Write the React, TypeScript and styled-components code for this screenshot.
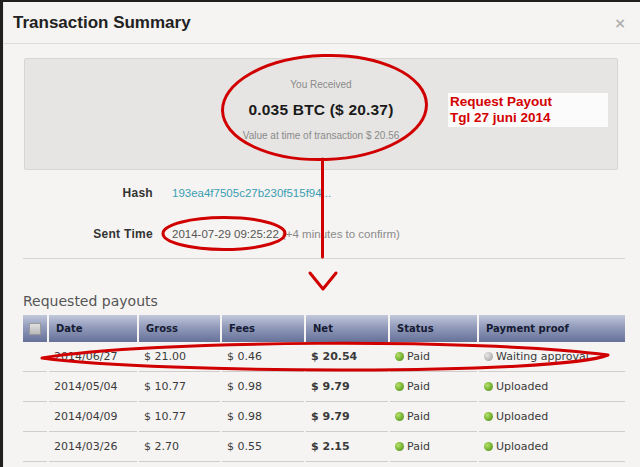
import React from "react";
import styled, { createGlobalStyle } from "styled-components";

const GlobalStyle = createGlobalStyle`
  html, body { margin: 0; padding: 0; }
  body {
    background: #1f1f1f;
    font-family: "Liberation Sans", Arial, sans-serif;
    width: 640px;
    height: 467px;
    overflow: hidden;
  }
`;

const Page = styled.div`
  position: relative;
  width: 640px;
  height: 467px;
  overflow: hidden;
`;

const Modal = styled.div`
  margin: 2px 0 0 3px;
  height: 465px;
  background: #f5f4f2;
  border-left: 1px solid #e9e8e6;
  box-sizing: border-box;
`;

const Header = styled.div`
  height: 41px;
  display: flex;
  align-items: center;
  justify-content: space-between;
  padding: 0 14px 0 9px;
  border-bottom: 1px solid #dcdbd9;
`;

const Title = styled.h1`
  margin: 0;
  font-family: "Liberation Sans", Arial, sans-serif;
  font-size: 17px;
  font-weight: bold;
  color: #222;
`;

const Close = styled.span`
  font-family: "DejaVu Sans", sans-serif;
  font-size: 14px;
  font-weight: bold;
  color: #b0b0b0;
`;

const Body = styled.div`
  padding-top: 14px;
`;

const SummaryBox = styled.div`
  position: relative;
  margin-left: 20px;
  width: 594px;
  height: 112px;
  box-sizing: border-box;
  background: #e6e5e3;
  border: 1px solid #d7d6d4;
  border-radius: 2px;
  padding-top: 19px;
  text-align: center;
`;

const Small = styled.div`
  font-size: 10px;
  line-height: 14px;
  color: #8a8a8a;
  margin-top: ${(p: { $gap?: number }) => p.$gap ?? 0}px;
`;

const Amount = styled.div`
  margin-top: 8px;
  font-size: 15.5px;
  line-height: 20px;
  font-weight: bold;
  color: #1a1a1a;
  letter-spacing: 0.2px;
`;

const Note = styled.div`
  position: absolute;
  left: 423px;
  top: 34px;
  width: 160px;
  height: 34px;
  background: #fbfbfb;
  padding: 1px 0 0 2px;
  box-sizing: border-box;
  text-align: left;
  font-size: 13.5px;
  line-height: 16px;
  font-weight: bold;
  color: #d30000;
`;

const InfoGrid = styled.div`
  display: grid;
  grid-template-columns: 149px auto;
  column-gap: 19px;
  row-gap: 25px;
  margin-top: 15px;
  align-items: center;
`;

const Label = styled.div`
  text-align: right;
  font-size: 12px;
  line-height: 16px;
  font-weight: bold;
  color: #333;
  letter-spacing: 0.3px;
`;

const Value = styled.div<{ $link?: boolean }>`
  font-size: 11.5px;
  line-height: 16px;
  color: ${(p) => (p.$link ? "#3a9db3" : "#555")};
`;

const Muted = styled.span`
  color: #8a8a8a;
`;

const Divider = styled.hr`
  margin: 16px 0 0 19px;
  width: 602px;
  border: 0;
  border-top: 1px solid #d6d5d3;
`;

const SectionTitle = styled.h2`
  margin: 33px 0 0 19px;
  font-family: "DejaVu Sans", Verdana, sans-serif;
  font-size: 14px;
  line-height: 18px;
  font-weight: normal;
  color: #555;
`;

const Table = styled.table`
  margin: 5px 0 0 17px;
  width: 606px;
  table-layout: fixed;
  border-collapse: separate;
  border-spacing: 2px 0;
  font-family: "DejaVu Sans", Verdana, sans-serif;
`;

const Th = styled.th`
  height: 27px;
  padding: 0 0 0 7px;
  text-align: left;
  font-size: 10px;
  font-weight: bold;
  color: #151b33;
  background: linear-gradient(to bottom, #c3c8dc 0%, #969fbe 40%, #7a84a8 75%, #66719a 100%);
`;

const CheckTh = styled(Th)`
  padding: 0;
  text-align: center;
`;

const CheckBox = styled.span`
  display: inline-block;
  width: 10px;
  height: 10px;
  vertical-align: middle;
  background: linear-gradient(#e0e0e0, #b9b9b9);
  border: 1px solid #9a9a9a;
`;

const Td = styled.td<{ $bold?: boolean }>`
  height: 29px;
  padding: 0 0 0 5px;
  font-size: 11px;
  color: #3a3a3a;
  font-weight: ${(p) => (p.$bold ? "bold" : "normal")};
  border-bottom: 1px solid #cfcecc;
  white-space: nowrap;
`;

const Dot = styled.span<{ $tone: "green" | "grey" }>`
  display: inline-block;
  width: 9px;
  height: 9px;
  border-radius: 50%;
  margin-right: 3px;
  vertical-align: -1px;
  background: ${(p) =>
    p.$tone === "green"
      ? "radial-gradient(circle at 35% 35%, #b6e06a 0%, #74b233 55%, #4d8418 100%)"
      : "radial-gradient(circle at 35% 35%, #e6e6e6 0%, #bdbdbd 55%, #999 100%)"};
`;

const Overlay = styled.svg`
  position: absolute;
  left: 0;
  top: 0;
  pointer-events: none;
`;

type Row = {
  date: string;
  gross: string;
  fees: string;
  net: string;
  proof: string;
  waiting?: boolean;
};

const rows: Row[] = [
  { date: "2014/06/27", gross: "$ 21.00", fees: "$ 0.46", net: "$ 20.54", proof: "Waiting approval", waiting: true },
  { date: "2014/05/04", gross: "$ 10.77", fees: "$ 0.98", net: "$ 9.79", proof: "Uploaded" },
  { date: "2014/04/09", gross: "$ 10.77", fees: "$ 0.98", net: "$ 9.79", proof: "Uploaded" },
  { date: "2014/03/26", gross: "$ 2.70", fees: "$ 0.55", net: "$ 2.15", proof: "Uploaded" },
];

export default function App() {
  return (
    <Page>
      <GlobalStyle />
      <Modal>
        <Header>
          <Title>Transaction Summary</Title>
          <Close>×</Close>
        </Header>
        <Body>
          <SummaryBox>
            <Small>You Received</Small>
            <Amount>0.035 BTC ($ 20.37)</Amount>
            <Small $gap={9}>Value at time of transaction $ 20.56</Small>
            <Note>
              Request Payout
              <br />
              Tgl 27 juni 2014
            </Note>
          </SummaryBox>
          <InfoGrid>
            <Label>Hash</Label>
            <Value $link>193ea4f7505c27b230f515f94...</Value>
            <Label>Sent Time</Label>
            <Value>
              2014-07-29 09:25:22 <Muted>(+4 minutes to confirm)</Muted>
            </Value>
          </InfoGrid>
          <Divider />
          <SectionTitle>Requested payouts</SectionTitle>
          <Table>
            <colgroup>
              <col style={{ width: 24 }} />
              <col style={{ width: 88 }} />
              <col style={{ width: 81 }} />
              <col style={{ width: 82 }} />
              <col style={{ width: 82 }} />
              <col style={{ width: 87 }} />
              <col style={{ width: 146 }} />
            </colgroup>
            <thead>
              <tr>
                <CheckTh>
                  <CheckBox />
                </CheckTh>
                <Th>Date</Th>
                <Th>Gross</Th>
                <Th>Fees</Th>
                <Th>Net</Th>
                <Th>Status</Th>
                <Th>Payment proof</Th>
              </tr>
            </thead>
            <tbody>
              {rows.map((r) => (
                <tr key={r.date}>
                  <Td />
                  <Td>{r.date}</Td>
                  <Td>{r.gross}</Td>
                  <Td>{r.fees}</Td>
                  <Td $bold>{r.net}</Td>
                  <Td>
                    <Dot $tone="green" />
                    Paid
                  </Td>
                  <Td>
                    <Dot $tone={r.waiting ? "grey" : "green"} />
                    {r.proof}
                  </Td>
                </tr>
              ))}
            </tbody>
          </Table>
        </Body>
      </Modal>
      <Overlay width="640" height="467" viewBox="0 0 640 467">
        <g fill="none" stroke="#d10000" strokeWidth="3" strokeLinecap="round" strokeLinejoin="round">
          <ellipse cx="324.5" cy="107.5" rx="102" ry="52" transform="rotate(-2 324.5 107.5)" />
          <line x1="322.5" y1="159" x2="322.5" y2="257" />
          <polyline points="310,273 323,289 336,273" />
          <ellipse cx="224" cy="233.5" rx="61" ry="16" />
          <path d="M42 358 C 150 340, 480 338, 608 355 C 560 375, 160 374, 42 358 Z" />
        </g>
      </Overlay>
    </Page>
  );
}
